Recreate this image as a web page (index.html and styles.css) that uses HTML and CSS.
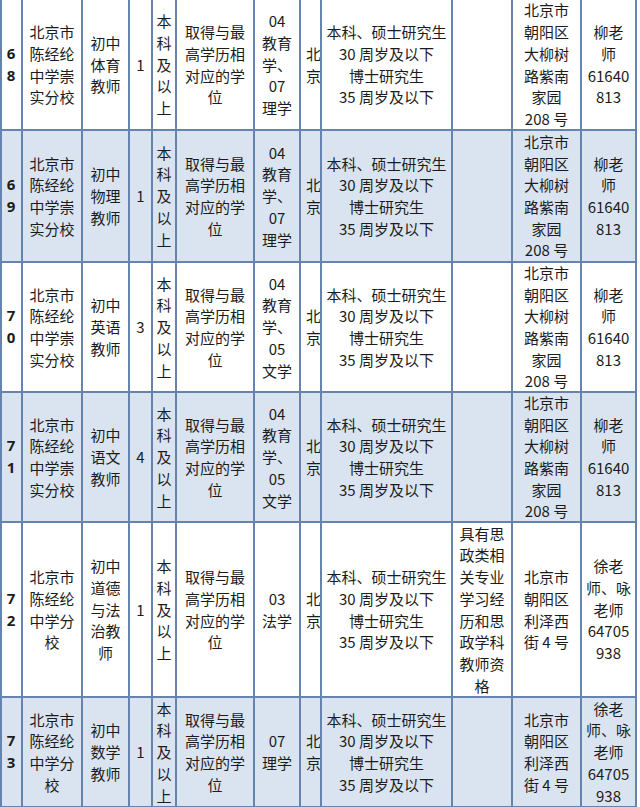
FILE: index.html
```html
<!DOCTYPE html>
<html lang="zh-CN">
<head>
<meta charset="utf-8">
<title>招聘岗位表</title>
<link rel="stylesheet" href="styles.css">
</head>
<body>
<div class="sheet">
  <div class="row">
    <div class="c no">6<br>8</div>
    <div class="c">北京市<br>陈经纶<br>中学崇<br>实分校</div>
    <div class="c">初中<br>体育<br>教师</div>
    <div class="c">1</div>
    <div class="c">本<br>科<br>及<br>以<br>上</div>
    <div class="c">取得与最<br>高学历相<br>对应的学<br>位</div>
    <div class="c">04<br>教育<br>学、<br>07<br>理学</div>
    <div class="c clip">北<br>京</div>
    <div class="c">本科、硕士研究生<br>30 周岁及以下<br>博士研究生<br>35 周岁及以下</div>
    <div class="c"></div>
    <div class="c">北京市<br>朝阳区<br>大柳树<br>路紫南<br>家园<br>208 号</div>
    <div class="c">柳老<br>师<br>61640<br>813</div>
  </div>
  <div class="row alt">
    <div class="c no">6<br>9</div>
    <div class="c">北京市<br>陈经纶<br>中学崇<br>实分校</div>
    <div class="c">初中<br>物理<br>教师</div>
    <div class="c">1</div>
    <div class="c">本<br>科<br>及<br>以<br>上</div>
    <div class="c">取得与最<br>高学历相<br>对应的学<br>位</div>
    <div class="c">04<br>教育<br>学、<br>07<br>理学</div>
    <div class="c clip">北<br>京</div>
    <div class="c">本科、硕士研究生<br>30 周岁及以下<br>博士研究生<br>35 周岁及以下</div>
    <div class="c"></div>
    <div class="c">北京市<br>朝阳区<br>大柳树<br>路紫南<br>家园<br>208 号</div>
    <div class="c">柳老<br>师<br>61640<br>813</div>
  </div>
  <div class="row">
    <div class="c no">7<br>0</div>
    <div class="c">北京市<br>陈经纶<br>中学崇<br>实分校</div>
    <div class="c">初中<br>英语<br>教师</div>
    <div class="c">3</div>
    <div class="c">本<br>科<br>及<br>以<br>上</div>
    <div class="c">取得与最<br>高学历相<br>对应的学<br>位</div>
    <div class="c">04<br>教育<br>学、<br>05<br>文学</div>
    <div class="c clip">北<br>京</div>
    <div class="c">本科、硕士研究生<br>30 周岁及以下<br>博士研究生<br>35 周岁及以下</div>
    <div class="c"></div>
    <div class="c">北京市<br>朝阳区<br>大柳树<br>路紫南<br>家园<br>208 号</div>
    <div class="c">柳老<br>师<br>61640<br>813</div>
  </div>
  <div class="row alt">
    <div class="c no">7<br>1</div>
    <div class="c">北京市<br>陈经纶<br>中学崇<br>实分校</div>
    <div class="c">初中<br>语文<br>教师</div>
    <div class="c">4</div>
    <div class="c">本<br>科<br>及<br>以<br>上</div>
    <div class="c">取得与最<br>高学历相<br>对应的学<br>位</div>
    <div class="c">04<br>教育<br>学、<br>05<br>文学</div>
    <div class="c clip">北<br>京</div>
    <div class="c">本科、硕士研究生<br>30 周岁及以下<br>博士研究生<br>35 周岁及以下</div>
    <div class="c"></div>
    <div class="c">北京市<br>朝阳区<br>大柳树<br>路紫南<br>家园<br>208 号</div>
    <div class="c">柳老<br>师<br>61640<br>813</div>
  </div>
  <div class="row tall">
    <div class="c no">7<br>2</div>
    <div class="c">北京市<br>陈经纶<br>中学分<br>校</div>
    <div class="c">初中<br>道德<br>与法<br>治教<br>师</div>
    <div class="c">1</div>
    <div class="c">本<br>科<br>及<br>以<br>上</div>
    <div class="c">取得与最<br>高学历相<br>对应的学<br>位</div>
    <div class="c">03<br>法学</div>
    <div class="c clip">北<br>京</div>
    <div class="c">本科、硕士研究生<br>30 周岁及以下<br>博士研究生<br>35 周岁及以下</div>
    <div class="c">具有思<br>政类相<br>关专业<br>学习经<br>历和思<br>政学科<br>教师资<br>格</div>
    <div class="c">北京市<br>朝阳区<br>利泽西<br>街 4 号</div>
    <div class="c">徐老<br>师、咏<br>老师<br>64705<br>938</div>
  </div>
  <div class="row alt last">
    <div class="c no">7<br>3</div>
    <div class="c">北京市<br>陈经纶<br>中学分<br>校</div>
    <div class="c">初中<br>数学<br>教师</div>
    <div class="c">1</div>
    <div class="c">本<br>科<br>及<br>以<br>上</div>
    <div class="c">取得与最<br>高学历相<br>对应的学<br>位</div>
    <div class="c">07<br>理学</div>
    <div class="c clip">北<br>京</div>
    <div class="c">本科、硕士研究生<br>30 周岁及以下<br>博士研究生<br>35 周岁及以下</div>
    <div class="c"></div>
    <div class="c">北京市<br>朝阳区<br>利泽西<br>街 4 号</div>
    <div class="c">徐老<br>师、咏<br>老师<br>64705<br>938</div>
  </div>
</div>
</body>
</html>
```

FILE: styles.css
```css
html, body {
  margin: 0;
  padding: 0;
  background: #ffffff;
}

body {
  width: 640px;
  height: 807px;
  overflow: hidden;
  font-family: "Noto Sans CJK SC", "Noto Sans", sans-serif;
  font-size: 15px;
  line-height: 21.7px;
  color: #1c1c1c;
}

.sheet {
  width: 637px;
  border-left: 2px solid #6683ad;
  box-sizing: border-box;
  display: flex;
  flex-direction: column;
}

.row {
  display: grid;
  grid-template-columns: 21px 60px 47px 23px 24px 78px 46px 21px 131px 60px 69px 55px;
  height: 131px;
  background: #ffffff;
}

.row:nth-child(2) { height: 132px; }
.row:nth-child(3) { height: 130px; }
.row:nth-child(4) { height: 130px; }
.row.tall { height: 175px; }
.row.last { height: 110px; }

.row.alt {
  background: #dae4f1;
}

.c {
  box-sizing: border-box;
  border-right: 2px solid #6683ad;
  border-bottom: 2px solid #6683ad;
  display: flex;
  align-items: center;
  justify-content: center;
  text-align: center;
  overflow: hidden;
  white-space: nowrap;
}

.no {
  font-weight: 700;
  font-family: "Open Sans", "Noto Sans", sans-serif;
  font-size: 15px;
  padding-right: 1px;
}

.clip {
  justify-content: flex-start;
  padding-left: 5px;
  text-align: left;
}
```
